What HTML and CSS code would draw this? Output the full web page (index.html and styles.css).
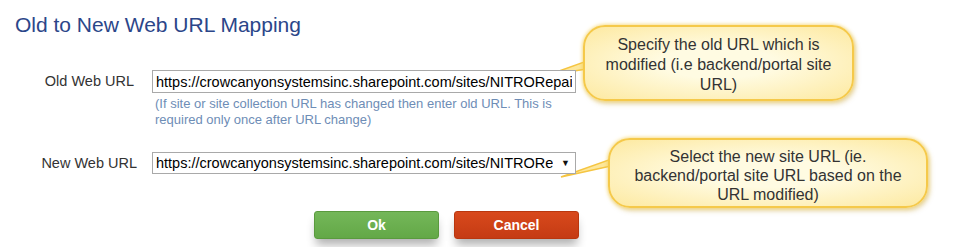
FILE: index.html
```html
<!DOCTYPE html>
<html lang="en">
<head>
    <meta charset="UTF-8">
    <title>Old to New Web URL Mapping</title>
    <link rel="stylesheet" href="styles.css">
</head>
<body>
    <h1 class="page-title">Old to New Web URL Mapping</h1>

    <div class="mapping-form">
        <div class="form-row">
            <label class="field-label" for="old-url">Old Web URL</label>
            <div class="field">
                <input type="text" id="old-url" class="url-input" value="https://crowcanyonsystemsinc.sharepoint.com/sites/NITRORepair">
                <div class="hint">(If site or site collection URL has changed then enter old URL. This is required only once after URL change)</div>
            </div>
        </div>

        <div class="form-row row-new">
            <label class="field-label label-new" for="new-url">New Web URL</label>
            <div class="field">
                <span class="select-wrap">
                    <select id="new-url" class="url-select">
                        <option>https://crowcanyonsystemsinc.sharepoint.com/sites/NITRORepair</option>
                    </select>
                </span>
            </div>
        </div>

        <div class="buttons">
            <button class="btn btn-ok">Ok</button>
            <button class="btn btn-cancel">Cancel</button>
        </div>
    </div>

    <!-- callouts -->
    <div class="callout callout-old">
        <svg class="tail" width="40" height="30" viewBox="0 0 40 30">
            <polygon points="1,18 40,4 40,12" fill="#fde79a" stroke="#f5c542" stroke-width="1.5"/>
        </svg>
        Specify the old URL which is modified (i.e backend/portal site URL)
    </div>
    <div class="callout callout-new">
        <svg class="tail" width="60" height="30" viewBox="0 0 60 30">
            <polygon points="1,27 60,6 60,14" fill="#fde79a" stroke="#f5c542" stroke-width="1.5"/>
        </svg>
        Select the new site URL (ie. backend/portal site URL based on the URL modified)
    </div>
</body>
</html>
```

FILE: styles.css
```css
body {
    margin: 0;
    font-family: "Liberation Sans", Arial, sans-serif;
    color: #333;
    background-color: #fff;
    position: relative;
    height: 247px;
    overflow: hidden;
}

.page-title {
    margin: 0;
    padding: 13px 0 0 15px;
    font-size: 21px;
    line-height: 23px;
    font-weight: normal;
    color: #2b4689;
}

.mapping-form {
    margin-top: 34px;
}

.form-row {
    display: grid;
    grid-template-columns: 152px 424px;
    align-items: start;
}

.row-new {
    margin-top: 24px;
}

.field-label {
    text-align: right;
    padding-right: 18px;
    font-size: 14.5px;
    line-height: 23px;
    color: #333;
}

.label-new {
    padding-right: 15px;
}

.url-input,
.url-select {
    box-sizing: border-box;
    width: 424px;
    height: 23px;
    margin: 0;
    border: 1px solid #a9a9a9;
    font-family: "Liberation Sans", Arial, sans-serif;
    font-size: 14.5px;
    color: #000;
    background-color: #fff;
    padding: 0 3px;
    outline: none;
}

.select-wrap {
    position: relative;
    display: inline-block;
}

.url-select {
    display: block;
    height: 22px;
    padding: 0 22px 0 3px;
    border-radius: 0;
    appearance: none;
    -webkit-appearance: none;
}

.select-wrap::after {
    content: "\25BC";
    position: absolute;
    right: 6px;
    top: 6px;
    font-size: 9px;
    line-height: 10px;
    color: #111;
    pointer-events: none;
}

.hint {
    margin-top: 3px;
    padding-left: 3px;
    font-size: 13px;
    line-height: 16px;
    color: #6e8db6;
}

.buttons {
    display: flex;
    gap: 15px;
    margin: 36px 0 0 314px;
}

.btn {
    width: 125px;
    height: 28px;
    border-radius: 3px;
    font-family: "Liberation Sans", Arial, sans-serif;
    font-size: 14px;
    font-weight: bold;
    color: #fff;
    cursor: pointer;
    box-shadow: 0 8px 10px -2px rgba(0, 0, 0, 0.3);
}

.btn-ok {
    background: linear-gradient(#74b759, #63a847);
    border: 1px solid #5a9a3e;
}

.btn-cancel {
    background: linear-gradient(#d8491c, #c53b14);
    border: 1px solid #b9370f;
}

.callout {
    position: absolute;
    box-sizing: border-box;
    text-align: center;
    font-size: 16px;
    line-height: 20px;
    color: #333;
    border: 2px solid #f5c94a;
    border-radius: 22px;
    background: radial-gradient(ellipse at center, #fffbe2 30%, #fde9a0 100%);
    box-shadow: 0 0 4px #f7d45e, 2px 3px 5px rgba(180, 140, 30, 0.35);
}

.callout .tail {
    position: absolute;
    top: 0;
    z-index: -1;
}

.callout-old {
    left: 583px;
    top: 25px;
    width: 271px;
    height: 76px;
    padding: 8px 18px 0;
}

.callout-old .tail {
    left: -38px;
    top: 30px;
}

.callout-new {
    left: 608px;
    top: 138px;
    width: 320px;
    height: 70px;
    padding: 7px 22px 0;
    line-height: 19px;
}

.callout-new .tail {
    left: -50px;
    top: 10px;
}
```
